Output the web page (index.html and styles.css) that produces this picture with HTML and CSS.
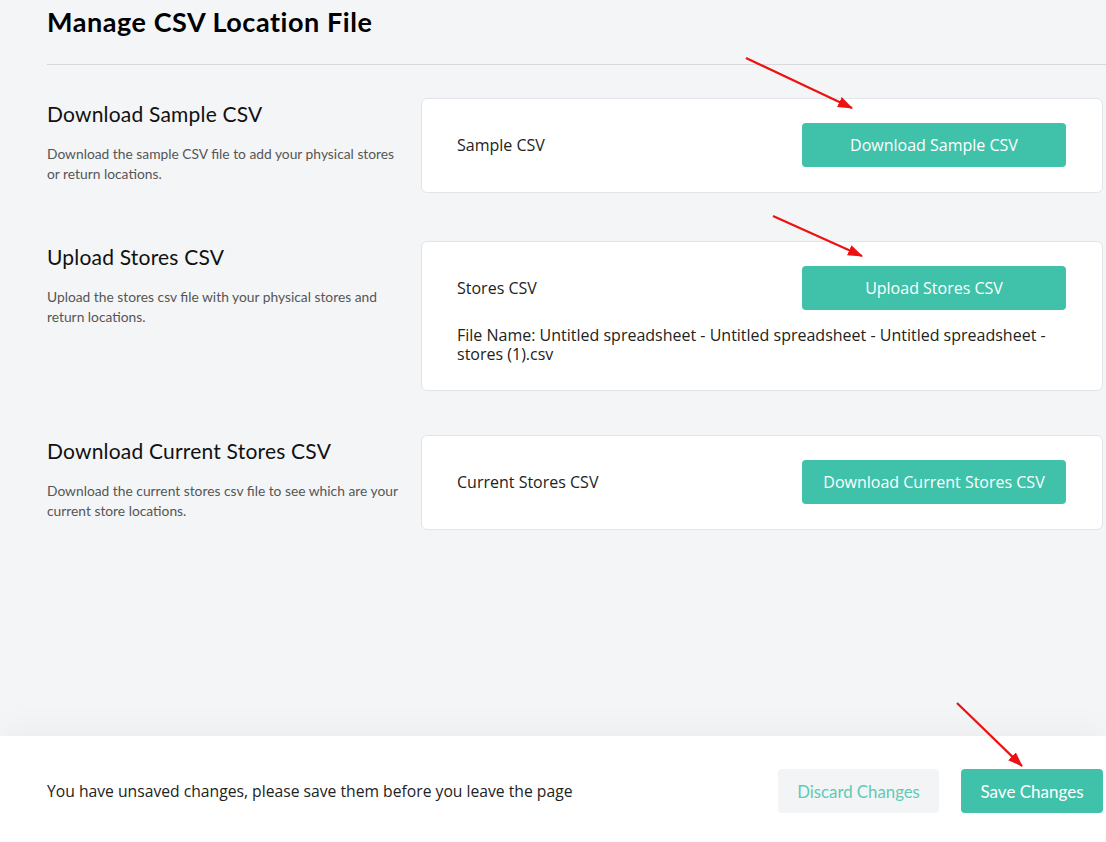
FILE: index.html
```html
<!DOCTYPE html>
<html lang="en">
<head>
<meta charset="UTF-8">
<meta name="viewport" content="width=device-width, initial-scale=1.0">
<title>Manage CSV Location File</title>
<link rel="stylesheet" href="styles.css">
</head>
<body>
    <main class="page">
        <h1 class="page-title">Manage CSV Location File</h1>
        <hr class="divider">

        <section class="row">
            <div class="row-info">
                <h2>Download Sample CSV</h2>
                <p>Download the sample CSV file to add your physical stores or return locations.</p>
            </div>
            <div class="card">
                <div class="card-line">
                    <span class="card-label">Sample CSV</span>
                    <button class="green_button">Download Sample CSV</button>
                </div>
            </div>
        </section>

        <section class="row row-tight">
            <div class="row-info">
                <h2>Upload Stores CSV</h2>
                <p>Upload the stores csv file with your physical stores and return locations.</p>
            </div>
            <div class="card">
                <div class="card-line">
                    <span class="card-label">Stores CSV</span>
                    <button class="green_button">Upload Stores CSV</button>
                </div>
                <p class="file-name">File Name: Untitled spreadsheet - Untitled spreadsheet - Untitled spreadsheet - stores (1).csv</p>
            </div>
        </section>

        <section class="row">
            <div class="row-info">
                <h2>Download Current Stores CSV</h2>
                <p>Download the current stores csv file to see which are your current store locations.</p>
            </div>
            <div class="card">
                <div class="card-line">
                    <span class="card-label">Current Stores CSV</span>
                    <button class="green_button">Download Current Stores CSV</button>
                </div>
            </div>
        </section>
    </main>

    <!-- 未保存提示栏 -->
    <footer class="save-bar">
        <span class="save-text">You have unsaved changes, please save them before you leave the page</span>
        <div class="save-actions">
            <button class="discard_button">Discard Changes</button>
            <button class="save_button">Save Changes</button>
        </div>
    </footer>

    <!-- 标注箭头 -->
    <svg class="arrows" width="1106" height="842" viewBox="0 0 1106 842">
        <defs>
            <marker id="head" markerWidth="15" markerHeight="11" refX="14" refY="5.5" orient="auto" markerUnits="userSpaceOnUse">
                <path d="M0,0 L15,5.5 L0,11 Z" fill="#ee1111"/>
            </marker>
        </defs>
        <line x1="746" y1="58" x2="852" y2="108" stroke="#ee1111" stroke-width="2.2" marker-end="url(#head)"/>
        <line x1="773" y1="216" x2="862" y2="256" stroke="#ee1111" stroke-width="2.2" marker-end="url(#head)"/>
        <line x1="957" y1="703" x2="1022" y2="766" stroke="#ee1111" stroke-width="2.2" marker-end="url(#head)"/>
    </svg>
</body>
</html>
```

FILE: styles.css
```css
html, body {
    margin: 0;
    height: 100%;
}
body {
    display: flex;
    flex-direction: column;
    background-color: #f4f5f7;
    font-family: Lato, "Open Sans", sans-serif;
    color: #111;
    overflow: hidden;
}
.page {
    flex: 1;
    padding: 0 3px 0 47px;
}
.page-title {
    font-size: 27px;
    line-height: 32px;
    font-weight: 700;
    letter-spacing: 0.55px;
    margin: 6px 0 26px;
    color: #000;
}
.divider {
    border: none;
    border-top: 1px solid #d5d8dd;
    margin: 0 -3px 33px 0;
}
.row {
    display: grid;
    grid-template-columns: 352px 1fr;
    column-gap: 22px;
    margin-bottom: 48px;
}
.row-tight {
    margin-bottom: 44px;
}
.row-info {
    padding-top: 4px;
}
.row-info h2 {
    font-size: 21px;
    line-height: 24px;
    font-weight: 400;
    letter-spacing: 0.2px;
    margin: 0 0 18px;
    color: #111;
}
.row-info p {
    font-size: 13.8px;
    line-height: 19.5px;
    color: #555;
    margin: 0;
}
.card {
    background-color: #fff;
    border: 1px solid #e1e4e9;
    border-radius: 6px;
    padding: 24px 36px 25px 35px;
}
.card-line {
    display: flex;
    align-items: center;
    justify-content: space-between;
}
.card-label {
    font-family: "Open Sans", sans-serif;
    font-size: 16px;
    color: #222;
}
.file-name {
    font-family: "Open Sans", sans-serif;
    font-size: 16px;
    line-height: 19px;
    color: #222;
    margin: 16px 0 1px;
}
button {
    border: none;
    border-radius: 4px;
    cursor: pointer;
}
.green_button {
    width: 264px;
    height: 44px;
    background-color: #3fc2a9;
    color: #fff;
    font-family: "Open Sans", sans-serif;
    font-size: 16px;
}
.save-bar {
    height: 106px;
    box-sizing: border-box;
    padding: 4px 3px 0 47px;
    background-color: #fff;
    box-shadow: 0 -8px 30px rgba(0, 0, 0, 0.035);
    display: flex;
    align-items: center;
    justify-content: space-between;
    position: relative;
}
.save-text {
    font-family: "Open Sans", sans-serif;
    font-size: 15.7px;
    color: #222;
}
.save-actions {
    display: flex;
    gap: 22px;
}
.discard_button {
    width: 161px;
    height: 44px;
    background-color: #f3f4f6;
    color: #5fcab6;
    font-family: Lato, sans-serif;
    font-size: 16.8px;
}
.save_button {
    width: 142px;
    height: 44px;
    background-color: #3fc2a9;
    color: #fff;
    font-family: Lato, sans-serif;
    font-size: 17px;
}
.arrows {
    position: absolute;
    left: 0;
    top: 0;
    pointer-events: none;
}
```
